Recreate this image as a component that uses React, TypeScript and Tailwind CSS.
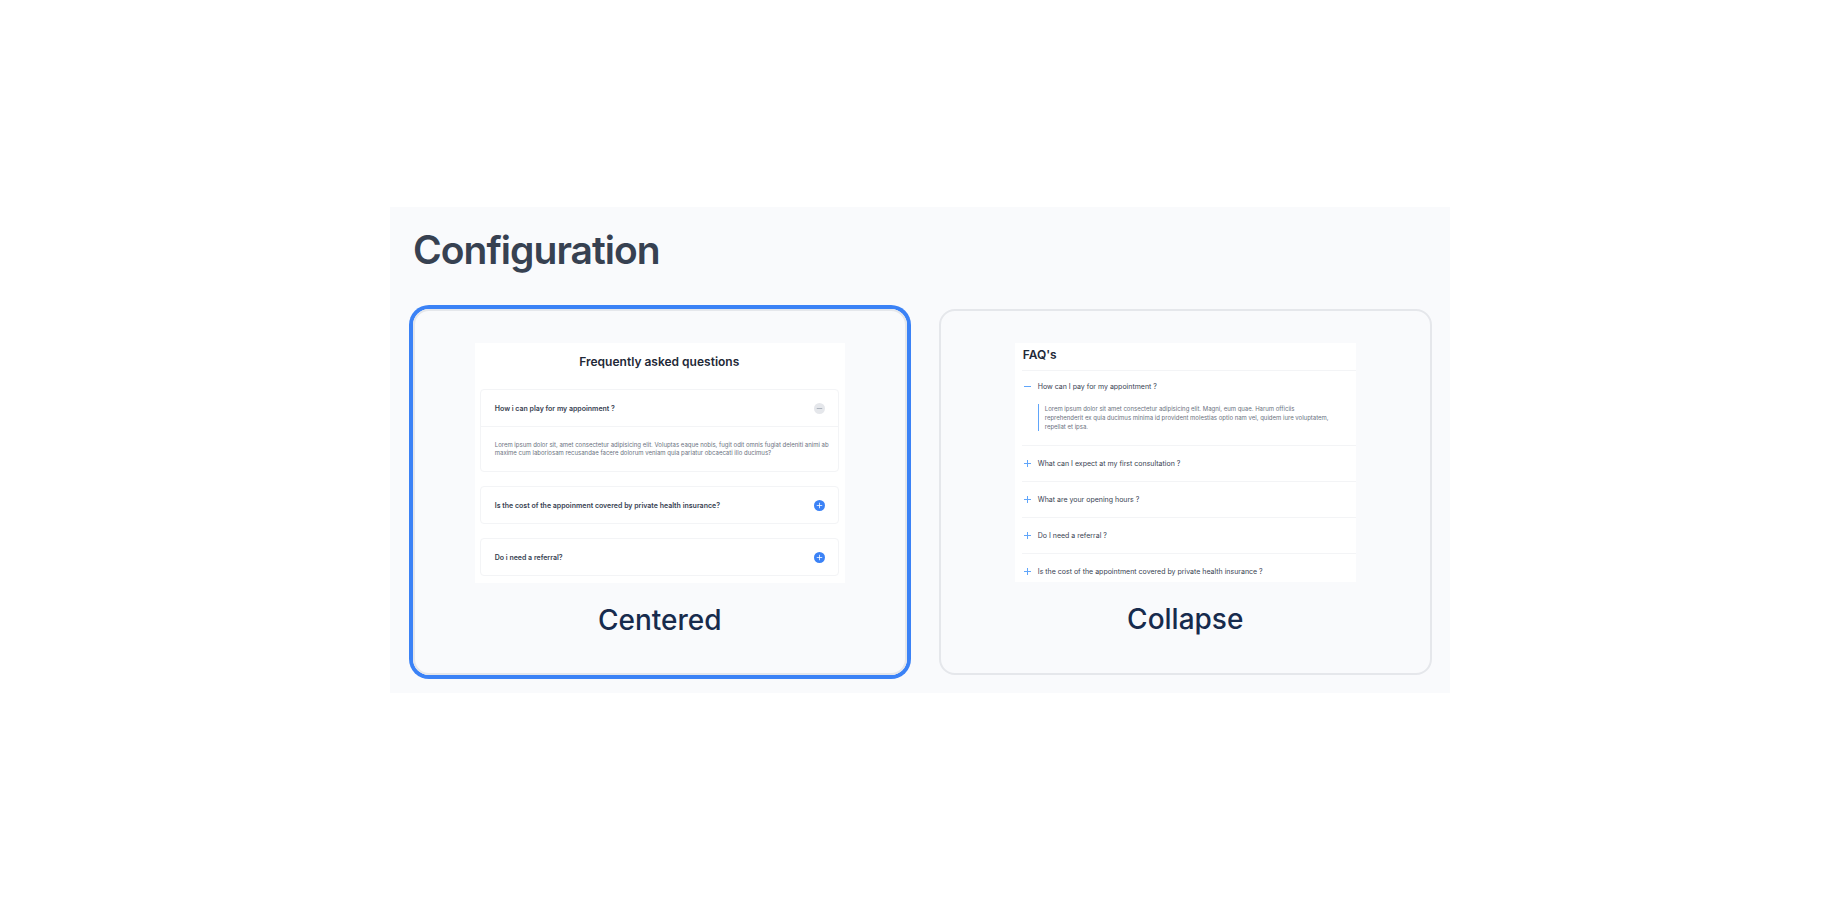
import { useState } from "react";

type Layout = "centered" | "collapse";

const centeredItems = [
  {
    question: "How i can play for my appoinment ?",
    answer:
      "Lorem ipsum dolor sit, amet consectetur adipisicing elit. Voluptas eaque nobis, fugit odit omnis fugiat deleniti animi ab maxime cum laboriosam recusandae facere dolorum veniam quia pariatur obcaecati illo ducimus?",
  },
  {
    question:
      "Is the cost of the appoinment covered by private health insurance?",
  },
  { question: "Do i need a referral?" },
];

const collapseItems = [
  {
    question: "How can I pay for my appointment ?",
    answer:
      "Lorem ipsum dolor sit amet consectetur adipisicing elit. Magni, eum quae. Harum officiis reprehenderit ex quia ducimus minima id provident molestias optio nam vel, quidem iure voluptatem, repellat et ipsa.",
  },
  { question: "What can I expect at my first consultation ?" },
  { question: "What are your opening hours ?" },
  { question: "Do I need a referral ?" },
  {
    question:
      "Is the cost of the appointment covered by private health insurance ?",
  },
];

function ToggleIcon({ open, className }: { open: boolean; className: string }) {
  return (
    <svg
      viewBox="0 0 9 9"
      fill="none"
      stroke="currentColor"
      className={className}
      aria-hidden="true"
    >
      <path d={open ? "M1 4.5h7" : "M1 4.5h7M4.5 1v7"} />
    </svg>
  );
}

function CenteredPreview() {
  return (
    <div className="h-60 w-[370px] bg-white pt-[13px] pr-[6px] pl-[5px]">
      <h2 className="text-center text-[12px] leading-3 font-semibold text-[#1f2937]">
        Frequently asked questions
      </h2>
      <div className="mt-[21px] flex flex-col gap-[14px]">
        {centeredItems.map((item) => (
          <div key={item.question} className="rounded border border-[#f3f4f6]">
            <button
              type="button"
              aria-expanded={Boolean(item.answer)}
              className="flex h-9 w-full items-center justify-between pr-[13px] pl-[14px] text-left text-[7px] leading-3 font-semibold text-[#374151]"
            >
              <span className="pt-px">{item.question}</span>
              {item.answer ? (
                <span className="flex size-[11px] items-center justify-center rounded-full bg-[#e5e7eb] text-[#9ca3af]">
                  <ToggleIcon open className="size-[7px]" />
                </span>
              ) : (
                <span className="flex size-[11px] items-center justify-center rounded-full bg-[#3b82f6] text-white">
                  <ToggleIcon open={false} className="size-[7px]" />
                </span>
              )}
            </button>
            {item.answer ? (
              <p className="border-t border-[#f3f4f6] py-[14px] pr-2 pl-[14px] text-[6px] leading-[8px] text-[#6b7280]">
                {item.answer}
              </p>
            ) : null}
          </div>
        ))}
      </div>
    </div>
  );
}

function CollapsePreview() {
  return (
    <div className="h-[239px] w-[341px] overflow-hidden bg-white pt-[6px] pl-[7px]">
      <h2 className="pb-[9px] pl-px text-[12px] leading-3 font-semibold text-[#1f2937]">
        FAQ's
      </h2>
      {collapseItems.map((item) => (
        <div key={item.question} className="border-t border-[#f3f4f6]">
          <button
            type="button"
            aria-expanded={Boolean(item.answer)}
            className="flex h-[35px] w-full items-center gap-[6px] pl-px text-left text-[7px] leading-3 text-[#374151] aria-expanded:h-[31px]"
          >
            <ToggleIcon
              open={Boolean(item.answer)}
              className="size-[9px] text-[#60a5fa]"
            />
            <span className="pt-px">{item.question}</span>
          </button>
          {item.answer ? (
            <div className="pt-[2px] pr-6 pb-[14px] pl-4">
              <p className="border-l border-[#60a5fa] pl-[6px] text-[6px] leading-[9px] text-[#6b7280]">
                {item.answer}
              </p>
            </div>
          ) : null}
        </div>
      ))}
    </div>
  );
}

const options = [
  { id: "centered" as Layout, title: "Centered", Preview: CenteredPreview },
  { id: "collapse" as Layout, title: "Collapse", Preview: CollapsePreview },
];

export default function App() {
  const [layout, setLayout] = useState<Layout>("centered");

  return (
    <main className="flex min-h-screen items-center justify-center bg-white font-['Inter',sans-serif]">
      <section className="w-full max-w-[1060px] bg-[#f9fafc] pt-[19px] pr-[18px] pb-[18px] pl-[23px]">
        <h1 className="text-[39px] leading-[48px] font-semibold tracking-tight text-[#374151]">
          Configuration
        </h1>
        <div className="mt-[35px] grid grid-cols-2 gap-8">
          {options.map(({ id, title, Preview }) => (
            <div
              key={id}
              className="flex flex-col items-center rounded-2xl border-2 border-[#e5e7eb] py-8 ring-[#3b82f6] has-[:checked]:ring-4"
            >
              <Preview />
              <label className="mt-4 cursor-pointer text-[28px] leading-[42px] font-medium text-[#172b4d]">
                <input
                  type="radio"
                  name="layout"
                  value={id}
                  checked={layout === id}
                  onChange={() => setLayout(id)}
                  className="sr-only"
                />
                {title}
              </label>
            </div>
          ))}
        </div>
      </section>
    </main>
  );
}
